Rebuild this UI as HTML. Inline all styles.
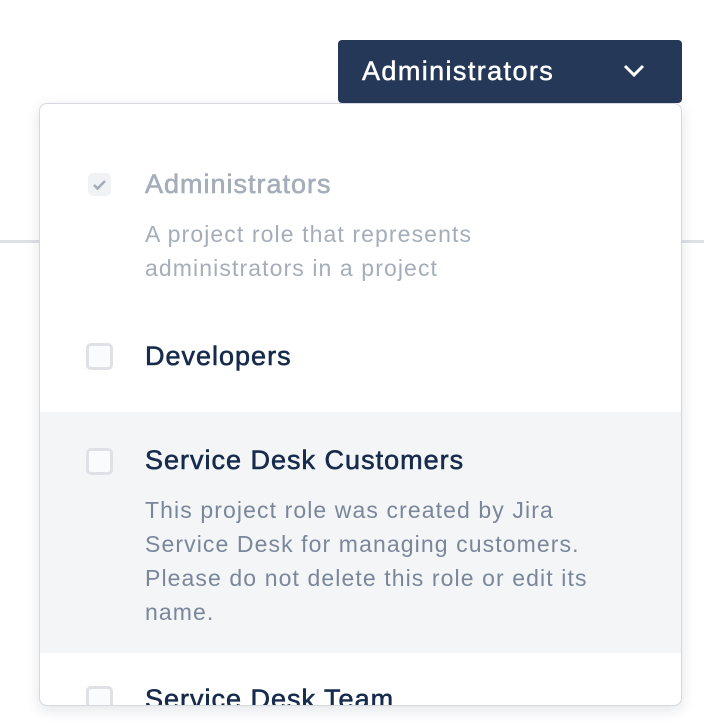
<!DOCTYPE html>
<html><head><style>
body{margin:0;width:704px;height:726px;background:#fff;position:relative;overflow:hidden;font-family:"Liberation Sans",sans-serif;}
.line{position:absolute;left:0;right:0;top:240px;height:3px;background:#dfe1e6;}
.btn{position:absolute;left:338px;top:40px;width:344px;height:63px;background:#253858;border-radius:4px;color:#fff;font-size:27px;letter-spacing:1.4px;-webkit-text-stroke:0.5px #fff;}
.btn span{position:absolute;left:24px;top:16px;}
.panel{position:absolute;left:39px;top:103px;width:641px;height:601px;border:1px solid #d5d8de;border-radius:8px;background:#fff;box-shadow:0 4px 14px rgba(9,30,66,.12);overflow:hidden;}
.cb{position:absolute;left:46px;width:21px;height:21px;border:3px solid #dfe1e6;background:#fafbfc;border-radius:5px;}
.t{position:absolute;left:105px;font-size:27px;letter-spacing:1px;color:#172b4d;white-space:nowrap;-webkit-text-stroke:0.6px currentColor;}
.d{position:absolute;left:105px;font-size:23px;letter-spacing:1.1px;line-height:34px;color:#7a869a;width:460px;}
.hov{position:absolute;left:0;right:0;top:308px;height:241px;background:#f4f5f7;}
</style></head><body>
<div class="line"></div>
<div class="panel">
 <div class="cb" style="top:69px;left:48px;width:23px;height:23px;border:none;background:#f1f2f4;"></div>
 <svg style="position:absolute;left:51px;top:72px" width="17" height="17" viewBox="0 0 17 17"><path d="M3 9l3.5 3.5L14 5" stroke="#a5adba" stroke-width="2.6" fill="none"/></svg>
 <div class="t" style="top:65px;color:#a5adba">Administrators</div>
 <div class="d" style="top:113px;color:#a5adba;width:360px">A project role that represents administrators in a project</div>
 <div class="cb" style="top:239px"></div>
 <div class="t" style="top:237px">Developers</div>
 <div class="hov"></div>
 <div class="cb" style="top:344px"></div>
 <div class="t" style="top:341px">Service Desk Customers</div>
 <div class="d" style="top:389px;width:450px">This project role was created by Jira Service Desk for managing customers. Please do not delete this role or edit its name.</div>
 <div class="cb" style="top:582px"></div>
 <div class="t" style="top:580px">Service Desk Team</div>
</div>
<div class="btn"><span>Administrators</span>
<svg style="position:absolute;left:284px;top:22px" width="24" height="18" viewBox="0 0 24 18"><path d="M3 4l9 9 9-9" stroke="#fff" stroke-width="3" fill="none"/></svg></div>
</body></html>
